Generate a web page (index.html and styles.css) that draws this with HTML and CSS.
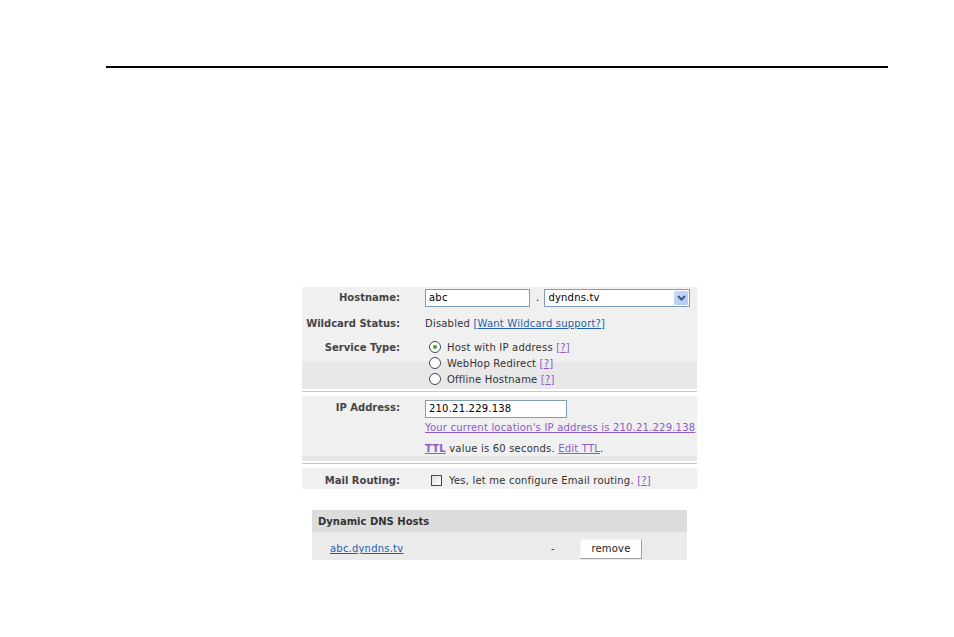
FILE: index.html
```html
<!DOCTYPE html>
<html lang="en">
<head>
    <meta charset="UTF-8">
    <title>Add Dynamic DNS Host</title>
    <link rel="stylesheet" href="styles.css">
</head>
<body>
    <div class="page-rule"></div>

    <div class="host-form">
        <!-- Hostname / wildcard / service type -->
        <div class="panel panel-main">
            <div class="row row-host">
                <div class="label">Hostname:</div>
                <div class="value">
                    <span class="textbox host-box">abc</span>
                    <span class="dot">.</span>
                    <span class="selectbox">
                        <span class="select-text">dyndns.tv</span>
                        <span class="select-btn">
                            <svg width="9" height="6" viewBox="0 0 9 6"><path d="M1 1 L4.5 4.5 L8 1" fill="none" stroke="#3a5a85" stroke-width="2"/></svg>
                        </span>
                    </span>
                </div>
            </div>
            <div class="row row-wild">
                <div class="label">Wildcard Status:</div>
                <div class="value">Disabled <a href="#" class="link">[<u>Want Wildcard support?</u>]</a></div>
            </div>
            <div class="row row-service">
                <div class="label">Service Type:</div>
                <div class="value">
                    <div class="option"><span class="radio checked"></span>Host with IP address <a href="#" class="help">[<u>?</u>]</a></div>
                    <div class="option"><span class="radio"></span>WebHop Redirect <a href="#" class="help">[<u>?</u>]</a></div>
                    <div class="option"><span class="radio"></span>Offline Hostname <a href="#" class="help">[<u>?</u>]</a></div>
                </div>
            </div>
        </div>
        <div class="sep"></div>

        <!-- IP address -->
        <div class="panel panel-ip">
            <div class="row row-ip">
                <div class="label">IP Address:</div>
                <div class="value"><span class="textbox ip-box">210.21.229.138</span></div>
            </div>
            <div class="row row-loc">
                <div class="label"></div>
                <div class="value"><a href="#" class="visited">Your current location's IP address is 210.21.229.138</a></div>
            </div>
            <div class="row row-ttl">
                <div class="label"></div>
                <div class="value"><a href="#" class="visited ttl">TTL</a> value is 60 seconds. <a href="#" class="visited">Edit TTL</a>.</div>
            </div>
        </div>
        <div class="sep"></div>

        <!-- Mail routing -->
        <div class="panel panel-mail">
            <div class="row">
                <div class="label">Mail Routing:</div>
                <div class="value"><span class="checkbox"></span>Yes, let me configure Email routing. <a href="#" class="help">[<u>?</u>]</a></div>
            </div>
        </div>

        <!-- Hosts list -->
        <div class="hosts">
            <div class="hosts-head">Dynamic DNS Hosts</div>
            <div class="hosts-row">
                <a href="#" class="host-link">abc.dyndns.tv</a>
                <span class="host-ip">-</span>
                <span class="remove-btn">remove</span>
            </div>
        </div>
    </div>
</body>
</html>
```

FILE: styles.css
```css
body {
    margin: 0;
    padding: 0;
    background: #ffffff;
    font-family: "DejaVu Sans", Verdana, sans-serif;
    font-size: 10px;
    letter-spacing: 0.2px;
    color: #333;
}

.page-rule {
    height: 2px;
    background: #000;
    margin: 66px 0 0 106px;
    width: 782px;
}

.host-form {
    width: 395px;
    margin: 219px 0 0 302px;
}

a {
    text-decoration: none;
}

u {
    text-decoration: underline;
}

.panel {
    background: #f0f0f0;
}

.panel-main {
    padding: 2px 0 1px;
    background: linear-gradient(#f0f0f0 75px, #e8e8e8 75px);
}

.panel-ip {
    padding: 4px 0 4px;
    background: linear-gradient(#f0f0f0 60px, #e6e6e6 60px);
}

.panel-mail {
    padding: 5px 0 0;
    height: 16px;
}

.sep {
    height: 1px;
    background: #c8c8c8;
    margin: 2px 0 4px;
}

.row {
    display: grid;
    grid-template-columns: 98px 1fr;
    column-gap: 25px;
    line-height: 16px;
}

.label {
    text-align: right;
    font-weight: bold;
    letter-spacing: 0;
    color: #444;
}

.row-host {
    height: 18px;
    line-height: 18px;
}

.row-wild {
    margin-top: 9px;
}

.row-service {
    margin-top: 8px;
}

.row-loc {
    margin-top: 2px;
}

.row-ttl {
    margin-top: 5px;
}

.value {
    white-space: nowrap;
}

.row-host .value {
    display: flex;
    align-items: center;
    height: 18px;
}

.textbox {
    display: inline-block;
    box-sizing: border-box;
    height: 18px;
    border: 1px solid #7f9db9;
    background: #fff;
    padding: 0 3px;
    line-height: 16px;
    color: #000;
}

.host-box {
    width: 105px;
}

.ip-box {
    width: 142px;
}

.dot {
    margin: 0 5px 0 6px;
    color: #000;
}

.selectbox {
    display: inline-flex;
    box-sizing: border-box;
    width: 146px;
    height: 18px;
    border: 1px solid #7f9db9;
    background: #fff;
    align-items: center;
    justify-content: space-between;
    color: #000;
}

.select-text {
    padding-left: 3px;
}

.select-btn {
    display: flex;
    align-items: center;
    justify-content: center;
    width: 14px;
    height: 14px;
    margin-right: 1px;
    background: linear-gradient(135deg, #cdd8fb, #b4c6f4);
    border-radius: 2px;
}

.link {
    color: #1f5fae;
}

.visited,
.help {
    color: #8a5cc8;
}

.visited {
    text-decoration: underline;
}

.ttl {
    font-weight: bold;
}

.option {
    height: 16px;
}

.radio {
    display: inline-block;
    box-sizing: border-box;
    width: 12px;
    height: 12px;
    border: 1px solid #3a4a5c;
    border-radius: 50%;
    background: #fff;
    margin: 0 6px 0 4px;
    vertical-align: -2px;
    position: relative;
}

.radio.checked::after {
    content: "";
    position: absolute;
    left: 3px;
    top: 3px;
    width: 4px;
    height: 4px;
    border-radius: 50%;
    background: #3aa33a;
}

.checkbox {
    display: inline-block;
    box-sizing: border-box;
    width: 11px;
    height: 11px;
    border: 1px solid #1c5180;
    background: linear-gradient(135deg, #dcdcd7, #ffffff);
    margin: 0 7px 0 6px;
    vertical-align: -2px;
}

.hosts {
    margin: 21px 0 0 10px;
    width: 375px;
}

.hosts-head {
    background: #dcdcdc;
    height: 22px;
    line-height: 24px;
    padding-left: 6px;
    font-weight: bold;
    letter-spacing: 0;
    color: #333;
}

.hosts-row {
    box-sizing: border-box;
    background: #ebebeb;
    height: 28px;
    padding-top: 5px;
    display: flex;
    align-items: center;
}

.host-link {
    color: #1f5fae;
    text-decoration: underline;
    margin-left: 18px;
    width: 221px;
}

.host-ip {
    width: 29px;
}

.remove-btn {
    box-sizing: border-box;
    width: 62px;
    height: 20px;
    line-height: 18px;
    text-align: center;
    background: #fff;
    border: 1px solid #f4f4f4;
    border-right-color: #a0a0a0;
    border-bottom-color: #a0a0a0;
    color: #222;
}
```
